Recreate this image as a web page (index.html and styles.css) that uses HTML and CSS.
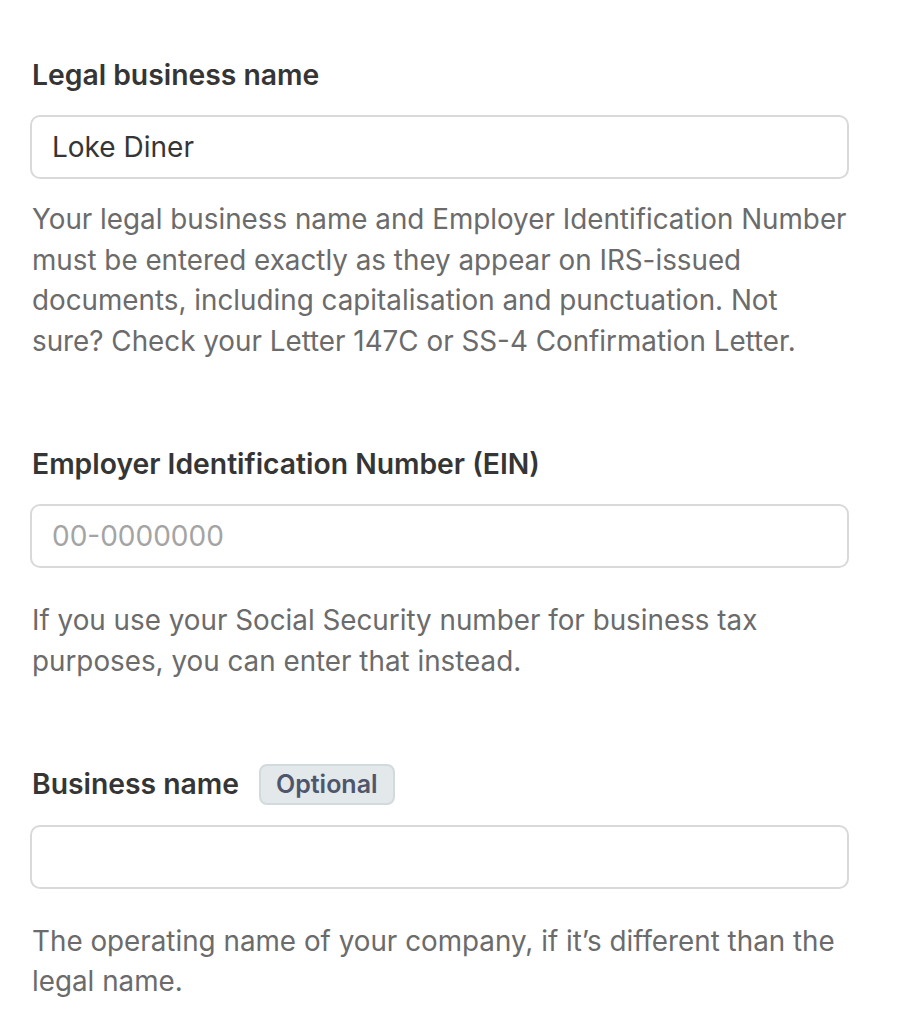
FILE: index.html
```html
<!DOCTYPE html>
<html lang="en">
<head>
<meta charset="utf-8">
<title>Business details</title>
<link rel="stylesheet" href="styles.css">
</head>
<body>
<form class="form">
  <div class="field">
    <div class="label-row"><label class="label" for="legal">Legal business name</label></div>
    <input class="input" id="legal" type="text" value="Loke Diner">
    <p class="help help-tight">Your legal business name and Employer Identification Number must be entered exactly as they appear on IRS-issued documents, including capitalisation and punctuation. Not sure? Check your Letter 147C or SS-4 Confirmation Letter.</p>
  </div>
  <div class="field">
    <div class="label-row"><label class="label" for="ein">Employer Identification Number (EIN)</label></div>
    <input class="input" id="ein" type="text" placeholder="00-0000000">
    <p class="help">If you use your Social Security number for business tax purposes, you can enter that instead.</p>
  </div>
  <div class="field">
    <div class="label-row"><label class="label" for="dba">Business name</label><span class="badge">Optional</span></div>
    <input class="input" id="dba" type="text">
    <p class="help">The operating name of your company, if it’s different than the legal name.</p>
  </div>
</form>
</body>
</html>
```

FILE: styles.css
```css
html, body {
  margin: 0;
  padding: 0;
  background: #ffffff;
}

body {
  font-family: Inter, "Noto Sans", "Liberation Sans", sans-serif;
  color: #353535;
}

.form {
  width: 819px;
  padding: 54px 0 0 30px;
  display: flex;
  flex-direction: column;
  gap: 82px;
}

.field {
  display: flex;
  flex-direction: column;
}

.label-row {
  display: flex;
  align-items: center;
  gap: 20px;
  height: 41px;
  margin-bottom: 20px;
  padding-left: 2px;
}

.label {
  font-size: 28.3px;
  font-weight: 600;
  line-height: 40px;
  color: #353535;
}

.badge {
  display: inline-flex;
  align-items: center;
  box-sizing: border-box;
  height: 41px;
  padding: 0 15px;
  font-size: 25px;
  font-weight: 600;
  color: #4f566b;
  background: #e3e8eb;
  border: 2px solid #d3dadd;
  border-radius: 8px;
}

.input {
  box-sizing: border-box;
  width: 819px;
  height: 64px;
  margin: 0;
  padding: 0 20px;
  font-family: inherit;
  font-size: 28px;
  color: #353535;
  background: #ffffff;
  border: 2px solid #d9d9d9;
  border-radius: 10px;
  outline: none;
}

.input::placeholder {
  color: #a4a4a4;
}

.help {
  margin: 32px 0 0;
  padding-left: 2px;
  font-size: 27.8px;
  line-height: 40.6px;
  color: #6b6b6b;
}

.help-tight {
  margin-top: 20px;
}
```
